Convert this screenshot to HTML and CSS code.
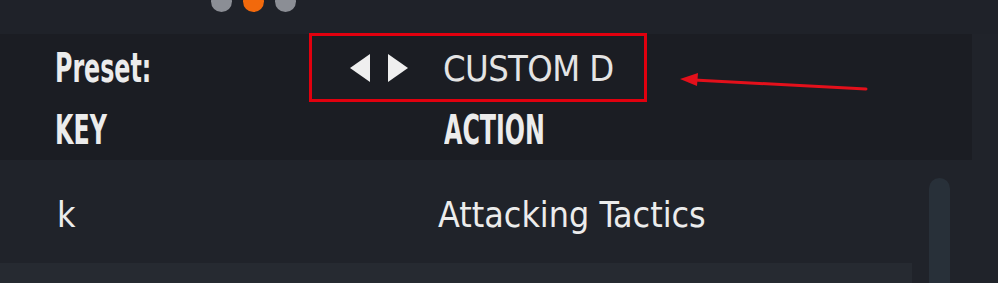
FILE: index.html
```html
<!DOCTYPE html>
<html>

<head>
    <meta charset="utf-8">
    <title>Key Bindings</title>
    <meta name="viewport" content="width=device-width, initial-scale=1">
    <link rel="stylesheet" href="styles.css">
</head>

<body>
    <div class="pager">
        <span class="dot"></span>
        <span class="dot active"></span>
        <span class="dot"></span>
    </div>

    <div class="panel">
        <div class="preset-row">
            <p class="label-cell"><span class="label">Preset:</span></p>
            <div class="preset-box">
                <span class="tri tri-left"></span>
                <span class="tri tri-right"></span>
                <span class="preset-name">CUSTOM D</span>
            </div>
        </div>
        <div class="head-row">
            <p class="key-col"><span class="label">KEY</span></p>
            <p><span class="label">ACTION</span></p>
        </div>
    </div>

    <div class="list-wrap">
        <ul class="list">
            <li class="item">
                <span class="item-key">k</span>
                <span class="item-action">Attacking Tactics</span>
            </li>
            <li class="item-next"></li>
        </ul>
        <div class="scroll-track"></div>
    </div>

    <!-- red annotation arrow drawn over the screenshot -->
    <svg class="annot" width="998" height="283" viewBox="0 0 998 283">
        <line x1="866" y1="89" x2="694" y2="80" stroke="#e3101b" stroke-width="3" stroke-linecap="round" />
        <polygon points="680,79 698,73 697,86" fill="#e3101b" />
    </svg>
</body>

</html>
```

FILE: styles.css
```css
body {
    margin: 0;
    background-color: #20232a;
    color: #e9e9e9;
    font-family: "DejaVu Sans Condensed", "DejaVu Sans", sans-serif;
    width: 998px;
    height: 283px;
    overflow: hidden;
    position: relative;
}

p {
    margin: 0;
}

.pager {
    height: 34px;
    display: flex;
    gap: 11px;
    padding-left: 211px;
    background-color: #1f2229;
}

.dot {
    width: 21px;
    height: 21px;
    border-radius: 50%;
    background-color: #8b8e95;
    margin-top: -9px;
}

.dot.active {
    background-color: #f2690c;
}

.panel {
    width: 972px;
    height: 126px;
    background-color: #1b1d23;
}

/* the game font is a narrow DIN, squeeze the bold condensed face to fit */
.label {
    display: inline-block;
    font-family: "DejaVu Sans Condensed", "DejaVu Sans", sans-serif;
    font-weight: bold;
    font-size: 40px;
    color: #ececec;
    transform: scaleX(0.66);
    transform-origin: left center;
}

.preset-row {
    display: flex;
    align-items: center;
    height: 68px;
    padding-left: 55px;
}

.label-cell {
    width: 254px;
    margin-top: -1px;
}

.preset-box {
    box-sizing: border-box;
    width: 338px;
    height: 69px;
    margin-top: -1px;
    border: 3px solid #e1000e;
    display: flex;
    align-items: center;
    padding-left: 38px;
}

.tri {
    width: 0;
    height: 0;
    border-top: 14px solid transparent;
    border-bottom: 14px solid transparent;
}

.tri-left {
    border-right: 20px solid #efefef;
}

.tri-right {
    border-left: 20px solid #efefef;
    margin-left: 18px;
}

.preset-name {
    margin-left: 35px;
    font-size: 36px;
    letter-spacing: -0.6px;
    color: #e4e4e4;
    margin-top: 1px;
}

.head-row {
    display: flex;
    align-items: center;
    height: 58px;
    padding-left: 55px;
}

.head-row p {
    margin-top: -2px;
}

.key-col {
    width: 389px;
}

.list-wrap {
    display: flex;
    gap: 17px;
}

.list {
    list-style: none;
    margin: 0;
    padding: 0;
    width: 912px;
}

.item {
    display: flex;
    align-items: center;
    height: 103px;
    padding-left: 57px;
    font-size: 35.5px;
    color: #ececec;
}

.item-key,
.item-action {
    margin-top: 5px;
}

.item-key {
    width: 381px;
}

.item-next {
    height: 20px;
    background-color: #262a31;
}

.scroll-track {
    width: 21px;
    height: 105px;
    margin-top: 18px;
    border-radius: 11px 11px 0 0;
    background-color: #283039;
}

.annot {
    position: absolute;
    left: 0;
    top: 0;
}
```
